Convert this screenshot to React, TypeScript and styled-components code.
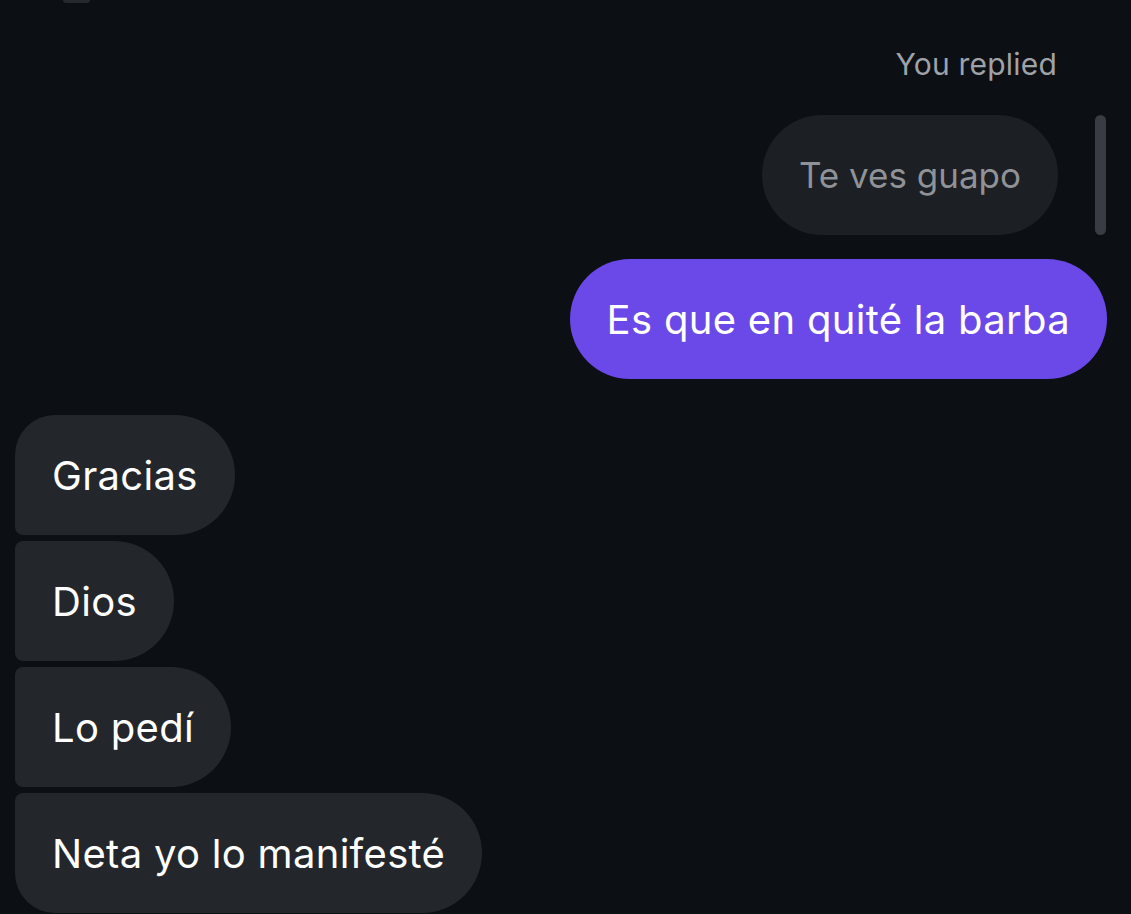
import React from "react";
import styled, { createGlobalStyle } from "styled-components";

const GlobalStyle = createGlobalStyle`
  html, body {
    margin: 0;
    padding: 0;
    background: #0c0f14;
  }
  body {
    font-family: Inter, "Noto Sans", "Liberation Sans", sans-serif;
    -webkit-font-smoothing: antialiased;
  }
`;

const Screen = styled.div`
  width: 1131px;
  height: 914px;
  overflow: hidden;
  background: #0c0f14;
  display: flex;
  flex-direction: column;
`;

const TopStub = styled.div`
  width: 27px;
  height: 3px;
  margin-left: 63px;
  border-radius: 0 0 14px 14px;
  background: #25282d;
`;

const RepliedLabel = styled.div`
  align-self: flex-end;
  margin: 44px 74px 0 0;
  font-size: 30px;
  line-height: 34px;
  color: #9fa2a7;
  letter-spacing: 0.2px;
`;

const ReplyRow = styled.div`
  display: flex;
  justify-content: flex-end;
  align-items: stretch;
  gap: 37px;
  margin: 34px 25px 0 0;
`;

const QuoteBar = styled.div`
  width: 11px;
  border-radius: 6px;
  background: #393c42;
`;

const Bubble = styled.div<{ $tone: "quote" | "mine" | "theirs"; $corners?: string }>`
  display: inline-flex;
  align-items: center;
  height: 120px;
  box-sizing: border-box;
  padding: 0 37px;
  white-space: nowrap;
  border-radius: ${(p) => p.$corners || "60px"};
  background: ${(p) =>
    p.$tone === "mine" ? "#6b48e8" : p.$tone === "quote" ? "#1c1f23" : "#23262b"};
  color: ${(p) => (p.$tone === "quote" ? "#8f9297" : "#ffffff")};
  font-size: ${(p) => (p.$tone === "quote" ? "35px" : "40px")};
  letter-spacing: ${(p) => (p.$tone === "quote" ? "0" : "0.3px")};
`;

const MineRow = styled.div`
  display: flex;
  justify-content: flex-end;
  margin: 24px 24px 0 0;
`;

const Group = styled.div`
  display: flex;
  flex-direction: column;
  align-items: flex-start;
  gap: 6px;
  margin: 36px 0 0 15px;
`;

const theirs = ["Gracias", "Dios", "Lo pedí", "Neta yo lo manifesté"];

const cornersFor = (i: number, n: number) => {
  const tl = i === 0 ? "40px" : "8px";
  const bl = i === n - 1 ? "40px" : "8px";
  return `${tl} 60px 60px ${bl}`;
};

export default function App() {
  return (
    <>
      <GlobalStyle />
      <Screen>
        <TopStub />
        <RepliedLabel>You replied</RepliedLabel>
        <ReplyRow>
          <Bubble $tone="quote">Te ves guapo</Bubble>
          <QuoteBar />
        </ReplyRow>
        <MineRow>
          <Bubble $tone="mine">Es que en quité la barba</Bubble>
        </MineRow>
        <Group>
          {theirs.map((t, i) => (
            <Bubble key={t} $tone="theirs" $corners={cornersFor(i, theirs.length)}>
              {t}
            </Bubble>
          ))}
        </Group>
      </Screen>
    </>
  );
}
